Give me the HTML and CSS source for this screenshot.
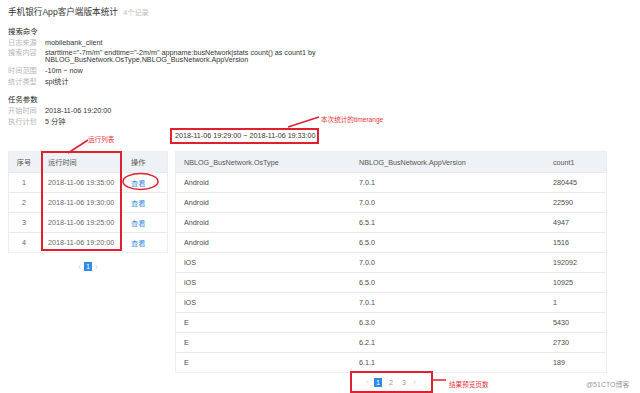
FILE: index.html
```html
<!DOCTYPE html>
<html lang="zh-CN">
  <head>
    <meta charset="UTF-8" />
    <meta name="viewport" content="width=device-width, initial-scale=1.0" />
    <title>手机银行App客户端版本统计</title>
    <link rel="stylesheet" href="styles.css">
  </head>
  <body>
    <div class="page">
      <h1 class="title">手机银行App客户端版本统计 <span class="count">4个记录</span></h1>

      <section class="info">
        <h3 class="info-title">搜索命令</h3>
        <div class="row"><span class="label">日志来源</span><span class="value">mobilebank_client</span></div>
        <div class="row"><span class="label">搜索内容</span><span class="value wrap">starttime="-7m/m" endtime="-2m/m" appname:busNetwork|stats count() as count1 by NBLOG_BusNetwork.OsType,NBLOG_BusNetwork.AppVersion</span></div>
        <div class="row"><span class="label">时间范围</span><span class="value">-10m ~ now</span></div>
        <div class="row"><span class="label">统计类型</span><span class="value">spl统计</span></div>
      </section>

      <section class="info task">
        <h3 class="info-title">任务参数</h3>
        <div class="row"><span class="label">开始时间</span><span class="value">2018-11-06 19:20:00</span></div>
        <div class="row"><span class="label">执行计划</span><span class="value">5 分钟</span></div>
      </section>

      <div class="results">
        <div class="runs">
          <table class="grid">
            <thead>
              <tr><th class="num">序号</th><th class="time">运行时间</th><th class="op">操作</th></tr>
            </thead>
            <tbody>
              <tr><td class="num">1</td><td class="time">2018-11-06 19:35:00</td><td class="op"><a>查看</a></td></tr>
              <tr><td class="num">2</td><td class="time">2018-11-06 19:30:00</td><td class="op"><a>查看</a></td></tr>
              <tr><td class="num">3</td><td class="time">2018-11-06 19:25:00</td><td class="op"><a>查看</a></td></tr>
              <tr><td class="num">4</td><td class="time">2018-11-06 19:20:00</td><td class="op"><a>查看</a></td></tr>
            </tbody>
          </table>
          <div class="pager">
            <span class="arrow">&lsaquo;</span><span class="page-no active">1</span><span class="arrow">&rsaquo;</span>
          </div>
        </div>

        <div class="preview">
          <div class="range mark">2018-11-06 19:29:00 ~ 2018-11-06 19:33:00</div>
          <table class="grid data">
            <thead>
              <tr><th class="c1">NBLOG_BusNetwork.OsType</th><th class="c2">NBLOG_BusNetwork.AppVersion</th><th>count1</th></tr>
            </thead>
            <tbody>
              <tr><td>Android</td><td>7.0.1</td><td>280445</td></tr>
              <tr><td>Android</td><td>7.0.0</td><td>22590</td></tr>
              <tr><td>Android</td><td>6.5.1</td><td>4947</td></tr>
              <tr><td>Android</td><td>6.5.0</td><td>1516</td></tr>
              <tr><td>iOS</td><td>7.0.0</td><td>192092</td></tr>
              <tr><td>iOS</td><td>6.5.0</td><td>10925</td></tr>
              <tr><td>iOS</td><td>7.0.1</td><td>1</td></tr>
              <tr><td>E</td><td>6.3.0</td><td>5430</td></tr>
              <tr><td>E</td><td>6.2.1</td><td>2730</td></tr>
              <tr><td>E</td><td>6.1.1</td><td>189</td></tr>
            </tbody>
          </table>
          <div class="pager-wrap">
            <div class="pager mark">
              <span class="arrow dim">&lsaquo;</span><span class="page-no active">1</span><span class="page-no">2</span><span class="page-no">3</span><span class="arrow">&rsaquo;</span>
            </div>
          </div>
        </div>
      </div>

      <!-- annotations drawn over the screenshot -->
      <div class="notes">
        <div class="col-box"></div>
        <span class="note note-runs">运行列表</span>
        <span class="note note-range">本次统计的timerange</span>
        <span class="note note-pager">结果预览页数</span>
        <svg class="note-lines" width="640" height="393" viewBox="0 0 640 393">
          <line x1="88" y1="140" x2="68" y2="153" />
          <line x1="288" y1="127" x2="319" y2="117" />
          <line x1="432" y1="380" x2="446" y2="380" />
          <ellipse cx="140.5" cy="181.5" rx="17.5" ry="8" />
        </svg>
      </div>

      <span class="watermark">@51CTO博客</span>
    </div>
  </body>
</html>
```

FILE: styles.css
```css
body {
  margin: 0;
  background: #fff;
  font-family: "Liberation Sans", "Noto Sans CJK SC", sans-serif;
  font-size: 7.2px;
  color: #4a4a4a;
}
.page {
  position: relative;
  width: 640px;
  height: 393px;
  padding: 5px 8px 0;
  box-sizing: border-box;
  overflow: hidden;
}
.title {
  margin: 0;
  font-size: 8.6px;
  font-weight: normal;
  line-height: 14px;
  color: #333;
}
.count {
  margin-left: 3px;
  font-size: 7.2px;
  color: #bbb;
}
.info {
  margin-top: 7px;
}
.info.task {
  margin-top: 8px;
}
.info-title {
  margin: 0;
  font-size: 7.4px;
  font-weight: normal;
  line-height: 10.7px;
  color: #222;
}
.row {
  display: flex;
  padding: 2px 0;
  line-height: 6.7px;
}
.label {
  width: 37px;
  flex: none;
  color: #b5b5b5;
}
.value {
  color: #333;
}
.value.wrap {
  width: 285px;
}

.results {
  display: flex;
  gap: 2px;
  margin-top: 1px;
}
.runs {
  width: 160px;
  padding-top: 23px;
}
.preview {
  width: 437px;
}

.grid {
  border-collapse: collapse;
  border: 1px solid #eceef2;
  table-layout: fixed;
}
.grid th {
  height: 20px;
  padding: 0;
  background: #eef1f5;
  font-weight: normal;
  text-align: left;
  color: #555;
}
.grid td {
  height: 19px;
  padding: 0;
  border-top: 1px solid #e8eaee;
  color: #4a4a4a;
}
.runs .grid {
  width: 160px;
}
.runs .grid td {
  color: #666;
}
.grid .num {
  width: 30px;
  text-align: center;
}
.grid .time {
  width: 73px;
  padding-left: 9px;
}
.grid .op {
  padding-left: 10px;
}
.grid a {
  color: #3d8fe0;
}

.data {
  width: 432px;
  margin-left: 5px;
}
.data th,
.data td {
  padding-left: 8px;
}
.data .c1 {
  width: 167px;
}
.data .c2 {
  width: 186px;
}

.range {
  width: 142px;
  height: 12px;
  line-height: 12px;
  padding-left: 3px;
  margin-bottom: 7px;
  color: #333;
  white-space: nowrap;
}
.mark {
  border: 2px solid #e0202e;
}

.pager {
  display: flex;
  justify-content: center;
  align-items: center;
  gap: 3px;
  margin-top: 9px;
  height: 9px;
  color: #999;
}
.arrow {
  color: #ccc;
  font-size: 9px;
}
.arrow.dim {
  color: #ddd;
}
.page-no {
  width: 8px;
  height: 9px;
  line-height: 9px;
  text-align: center;
  color: #999;
}
.page-no.active {
  background: #2f8be6;
  color: #fff;
}
.pager-wrap {
  display: flex;
  justify-content: center;
  margin-left: 5px;
  width: 432px;
}
.pager-wrap .pager {
  width: 79px;
  height: 18px;
  margin-top: -2px;
  gap: 5px;
}

.notes {
  position: absolute;
  inset: 0;
  pointer-events: none;
}
.col-box {
  position: absolute;
  left: 41px;
  top: 151px;
  width: 77px;
  height: 96px;
  border: 2px solid #e0202e;
}
.note {
  position: absolute;
  color: #e8323c;
  font-size: 6.6px;
  white-space: nowrap;
}
.note-runs {
  left: 88px;
  top: 134px;
}
.note-range {
  left: 321px;
  top: 114px;
}
.note-pager {
  left: 449px;
  top: 379px;
}
.note-lines {
  position: absolute;
  left: 0;
  top: 0;
}
.note-lines line,
.note-lines ellipse {
  fill: none;
  stroke: #e0202e;
  stroke-width: 1.5;
}
.watermark {
  position: absolute;
  left: 586px;
  top: 379px;
  font-size: 7px;
  color: #999;
}
```
